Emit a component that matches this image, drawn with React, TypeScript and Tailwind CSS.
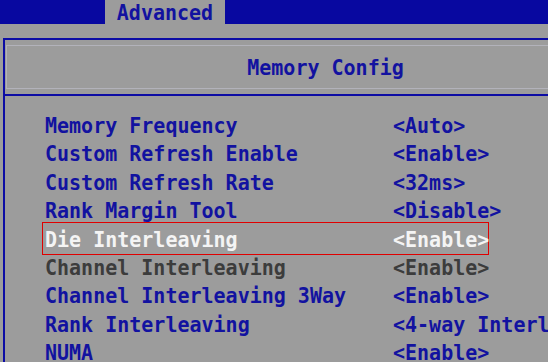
const rows: { label: string; value: string; state?: "selected" | "disabled" }[] = [
  { label: "Memory Frequency", value: "<Auto>" },
  { label: "Custom Refresh Enable", value: "<Enable>" },
  { label: "Custom Refresh Rate", value: "<32ms>" },
  { label: "Rank Margin Tool", value: "<Disable>" },
  { label: "Die Interleaving", value: "<Enable>", state: "selected" },
  { label: "Channel Interleaving", value: "<Enable>", state: "disabled" },
  { label: "Channel Interleaving 3Way", value: "<Enable>" },
  { label: "Rank Interleaving", value: "<4-way Interleave>" },
  { label: "NUMA", value: "<Enable>" },
];

const App = () => {
  return (
    <div className="w-[548px] h-[362px] overflow-hidden bg-[#9c9c9c] font-['DejaVu_Sans_Mono',monospace] font-bold text-[20px] text-[#1212a0]">
      <div className="h-[24px] bg-[#0808a0] flex">
        <div className="ml-[105px] w-[120px] h-full bg-[#9c9c9c] text-center leading-[24px]">
          <span className="inline-block scale-y-110">Advanced</span>
        </div>
      </div>

      <div className="mt-[14px] ml-[3px] w-[642px] h-[400px] border-l-2 border-t-2 border-[#0c0ca4]">
        <div className="h-[56px] border-b-2 border-[#0c0ca4] pt-[5px] pl-[1px]">
          <div className="h-[44px] border border-[#b2b2ba] flex items-center justify-center">
            <span className="inline-block scale-y-110">Memory Config</span>
          </div>
        </div>

        <div className="pt-[15px] pl-[40px]">
          {rows.map((r) => (
            <div
              key={r.label}
              className={
                "relative flex h-[28.4px] leading-[28.4px] whitespace-nowrap " +
                (r.state === "selected"
                  ? "text-[#f4f4f4]"
                  : r.state === "disabled"
                  ? "text-[#3c3c3c]"
                  : "")
              }
            >
              {r.state === "selected" && (
                <div className="absolute left-[-3px] top-[-3px] bottom-[-2px] w-[447px] border border-[#e00000]" />
              )}
              <span className="w-[348px] shrink-0 inline-block scale-y-110 origin-center">{r.label}</span>
              <span className="inline-block scale-y-110">{r.value}</span>
            </div>
          ))}
        </div>
      </div>
    </div>
  );
};

export default App;
